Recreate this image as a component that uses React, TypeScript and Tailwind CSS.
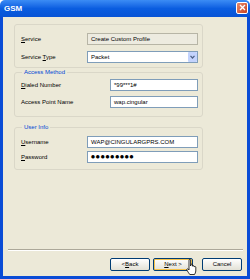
import { ReactNode } from "react"

function Field({ w, children, disabled }: { w: string; children: ReactNode; disabled?: boolean }) {
  return (
    <div
      className={`${w} h-[12px] flex items-center pl-[3px] border text-[6px] text-black ${
        disabled ? "bg-[#EDEBE0] border-[#B7B5A6]" : "bg-white border-[#7F9DB9]"
      }`}
    >
      {children}
    </div>
  )
}

function Row({ label, children }: { label: ReactNode; children: ReactNode }) {
  return (
    <div className="flex items-center justify-between">
      <span className="text-[6px] text-black leading-none">{label}</span>
      {children}
    </div>
  )
}

function Btn({ children, primary }: { children: ReactNode; primary?: boolean }) {
  return (
    <div
      className={`w-[40px] h-[13px] rounded-[2px] border border-[#003C74] bg-gradient-to-b from-white to-[#E3E1D6] flex items-center justify-center text-[6px] text-black ${
        primary ? "shadow-[inset_0_0_0_1px_#F5C24A]" : ""
      }`}
    >
      {children}
    </div>
  )
}

export default function App() {
  return (
    <div className="w-[250px] h-[279px] flex flex-col relative font-['Liberation_Sans',sans-serif]">
      <div className="h-[17px] rounded-t-[5px] bg-gradient-to-b from-[#3B8CF5] via-[#0A5DE0] to-[#0853D5] flex items-center justify-between pl-[4px] pr-[2px]">
        <span className="text-white font-bold text-[8px] leading-none">GSM</span>
        <div className="w-[12px] h-[12px] mb-[2px] rounded-[2px] border border-white bg-gradient-to-br from-[#E88A6C] to-[#C8401C] flex items-center justify-center">
          <svg width="7" height="7" viewBox="0 0 7 7">
            <path d="M1 1 L6 6 M6 1 L1 6" stroke="white" strokeWidth="1.4" />
          </svg>
        </div>
      </div>

      <div className="flex-1 bg-[#ECE9D8] border-x-[3px] border-b-[3px] border-[#0A4CD6] flex flex-col">
        <div className="pl-[11px] pt-[7px] w-[200px]">
          <div className="border border-[#DAD7C8] rounded-[3px] pl-[6px] pr-[4px] pt-[8px] pb-[4px] flex flex-col gap-[6px]">
            <Row label={<><u>S</u>ervice</>}>
              <Field w="w-[111px]" disabled>Create Custom Profile</Field>
            </Row>
            <Row label={<>Service <u>T</u>ype</>}>
              <div className="w-[111px] h-[12px] flex items-center justify-between pl-[3px] border border-[#7F9DB9] bg-white text-[6px] text-black">
                Packet
                <div className="w-[9px] h-[10px] mr-[0.5px] rounded-[1px] bg-[#C3D3FD] flex items-center justify-center">
                  <svg width="5" height="4" viewBox="0 0 5 4">
                    <path d="M0.5 0.8 L2.5 3 L4.5 0.8" stroke="#4D6185" strokeWidth="1.2" fill="none" />
                  </svg>
                </div>
              </div>
            </Row>
          </div>

          <fieldset className="border border-[#DAD7C8] rounded-[3px] pl-[6px] pr-[4px] pt-[3px] pb-[8px] flex flex-col gap-[5px]">
            <legend className="text-[6px] leading-[8px] text-[#0046D5] ml-[1px] px-[2px]">Access Method</legend>
            <Row label={<><u>D</u>ialed Number</>}>
              <Field w="w-[88px]">*99***1#</Field>
            </Row>
            <Row label="Access Point Name">
              <Field w="w-[88px]">wap.cingular</Field>
            </Row>
          </fieldset>

          <fieldset className="mt-[6px] border border-[#DAD7C8] rounded-[3px] pl-[6px] pr-[4px] pt-[5px] pb-[6px] flex flex-col gap-[3px]">
            <legend className="text-[6px] leading-[8px] text-[#0046D5] ml-[1px] px-[2px]">User Info</legend>
            <Row label={<><u>U</u>sername</>}>
              <Field w="w-[111px]">WAP@CINGULARGPRS.COM</Field>
            </Row>
            <Row label={<><u>P</u>assword</>}>
              <Field w="w-[111px]">
                <span className="font-['DejaVu_Sans',sans-serif] text-[4.5px] tracking-[0.9px]">●●●●●●●●●</span>
              </Field>
            </Row>
          </fieldset>
        </div>

        <div className="mt-auto mx-[5px] mr-[4px] border-t border-[#ACA899] border-b border-b-white" />
        <div className="flex justify-end pr-[5px] pt-[7px] pb-[5px]">
          <div className="flex gap-[3px]">
            <Btn>&lt; <u>B</u>ack</Btn>
            <Btn primary>
              <u>N</u>ext &gt;
            </Btn>
          </div>
          <div className="ml-[9px]">
            <Btn>Cancel</Btn>
          </div>
        </div>
      </div>

      <svg className="absolute left-[186px] top-[259px]" width="12" height="17" viewBox="0 0 12 17">
        <path
          d="M3 1 C3 0.3 4.6 0.3 4.6 1 L4.6 7 L5 5.6 C5 5 6.5 5 6.5 5.8 L6.6 7.2 C6.7 6.5 8.1 6.5 8.1 7.3 L8.2 8 C8.3 7.4 9.8 7.4 9.8 8.2 L9.8 12 C9.8 13.5 9 14.5 8.5 15.5 L3.8 15.5 C3 14 1.4 12.5 0.8 11 C0.4 10 1.6 9.4 2.3 10.2 L3 11 Z"
          fill="white"
          stroke="black"
          strokeWidth="0.8"
        />
      </svg>
    </div>
  )
}
